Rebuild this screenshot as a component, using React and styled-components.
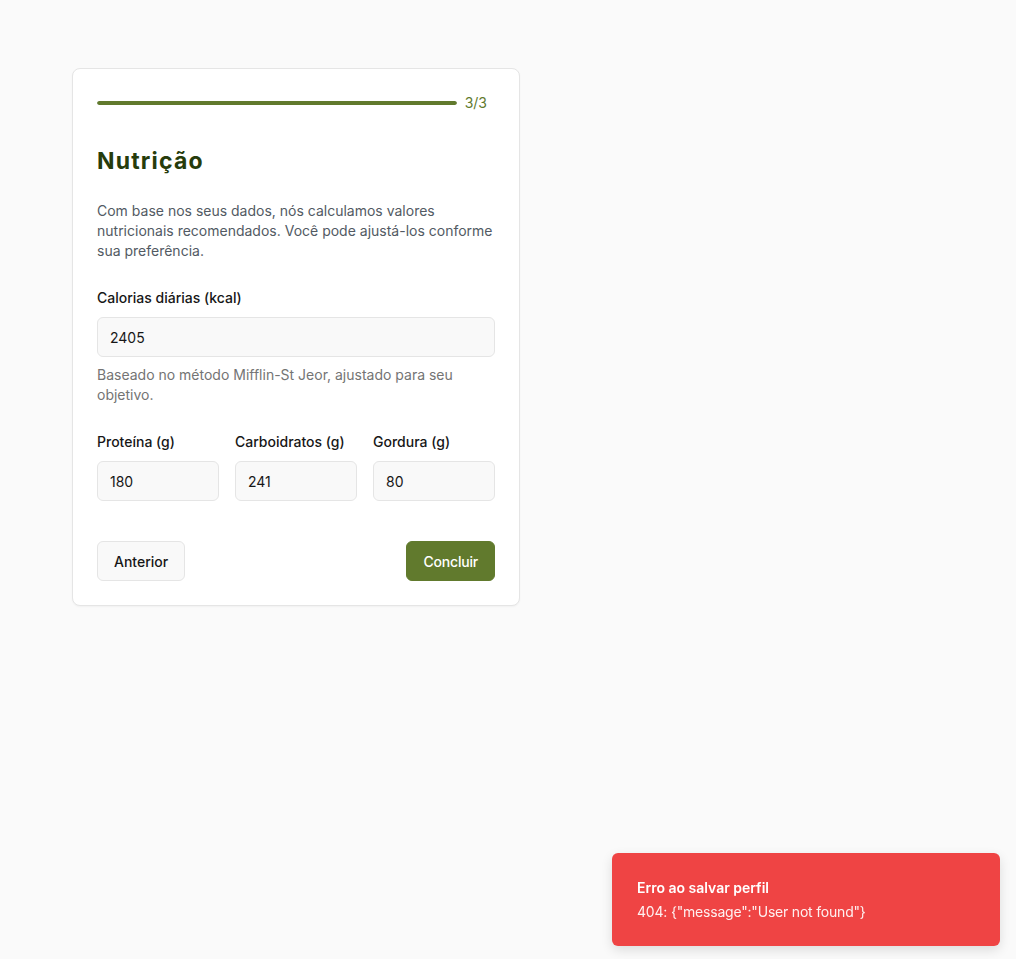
import React from "react";
import styled, { createGlobalStyle } from "styled-components";

const Global = createGlobalStyle`
  html, body { margin: 0; padding: 0; background: #fafafa; }
  body { font-family: Inter, "Noto Sans", sans-serif; color: #171717; }
  * { box-sizing: border-box; }
`;

const Page = styled.div`
  min-height: 959px;
  padding: 68px 72px;
`;

const Card = styled.div`
  width: 448px;
  background: #ffffff;
  border: 1px solid #e5e5e5;
  border-radius: 8px;
  padding: 24px;
  box-shadow: 0 1px 2px rgba(0,0,0,0.04);
`;

const ProgressRow = styled.div`
  display: flex;
  align-items: center;
  gap: 8px;
  height: 20px;
`;

const Track = styled.div`
  flex: 1;
  height: 4px;
  border-radius: 2px;
  background: #e5e5e5;
  overflow: hidden;
`;

const Fill = styled.div`
  height: 100%;
  background: #617a2d;
  border-radius: 2px;
`;

const Step = styled.span`
  font-size: 14px;
  line-height: 20px;
  color: #617a2d;
  padding-right: 8px;
`;

const Title = styled.h1`
  margin: 32px 0 24px;
  font-size: 23px;
  line-height: 32px;
  font-weight: 700;
  letter-spacing: 1.2px;
  color: #263c0c;
`;

const Description = styled.p`
  margin: 0 0 27px;
  font-size: 14px;
  line-height: 20px;
  color: #525a63;
`;

const Label = styled.label`
  display: block;
  font-size: 14px;
  line-height: 20px;
  font-weight: 500;
  color: #171717;
  margin-bottom: 9px;
`;

const Input = styled.input`
  display: block;
  width: 100%;
  height: 40px;
  padding: 0 12px;
  font-family: inherit;
  font-size: 14px;
  color: #171717;
  background: #f9f9f9;
  border: 1px solid #e5e5e5;
  border-radius: 6px;
  outline: none;
`;

const Help = styled.p`
  margin: 8px 0 27px;
  font-size: 14px;
  line-height: 20px;
  color: #747474;
`;

const Grid = styled.div`
  display: grid;
  grid-template-columns: repeat(3, 1fr);
  gap: 16px;
`;

const Actions = styled.div`
  display: flex;
  justify-content: space-between;
  margin-top: 40px;
`;

const Button = styled.button`
  height: 40px;
  padding: 0 16px;
  font-family: inherit;
  font-size: 14px;
  font-weight: 500;
  letter-spacing: ${p => (p.$primary ? "-0.2px" : "0")};
  border-radius: 6px;
  cursor: pointer;
  border: 1px solid ${p => (p.$primary ? "#617a2d" : "#e5e5e5")};
  background: ${p => (p.$primary ? "#617a2d" : "#f9f9f9")};
  color: ${p => (p.$primary ? "#ffffff" : "#171717")};
`;

const Toast = styled.div`
  position: fixed;
  right: 16px;
  bottom: 13px;
  width: 388px;
  padding: 25px 24px 24px 25px;
  background: #ef4444;
  border-radius: 6px;
  box-shadow: 0 4px 12px rgba(0,0,0,0.12);
  color: #fff;
`;

const ToastTitle = styled.div`
  font-size: 14px;
  line-height: 20px;
  font-weight: 600;
`;

const ToastMsg = styled.div`
  margin-top: 4px;
  font-size: 14px;
  line-height: 20px;
  letter-spacing: -0.2px;
  color: rgba(255,255,255,0.92);
`;

function Field({ label, value }) {
  return (
    <div>
      <Label>{label}</Label>
      <Input defaultValue={value} />
    </div>
  );
}

export default function App() {
  return (
    <>
      <Global />
      <Page>
        <Card>
          <ProgressRow>
            <Track>
              <Fill style={{ width: "100%" }} />
            </Track>
            <Step>3/3</Step>
          </ProgressRow>
          <Title>Nutrição</Title>
          <Description>
            Com base nos seus dados, nós calculamos valores nutricionais recomendados. Você pode ajustá-los conforme sua preferência.
          </Description>
          <Label>Calorias diárias (kcal)</Label>
          <Input defaultValue="2405" />
          <Help>Baseado no método Mifflin-St Jeor, ajustado para seu objetivo.</Help>
          <Grid>
            <Field label="Proteína (g)" value="180" />
            <Field label="Carboidratos (g)" value="241" />
            <Field label="Gordura (g)" value="80" />
          </Grid>
          <Actions>
            <Button>Anterior</Button>
            <Button $primary>Concluir</Button>
          </Actions>
        </Card>
      </Page>
      <Toast>
        <ToastTitle>Erro ao salvar perfil</ToastTitle>
        <ToastMsg>404: {'{"message":"User not found"}'}</ToastMsg>
      </Toast>
    </>
  );
}
